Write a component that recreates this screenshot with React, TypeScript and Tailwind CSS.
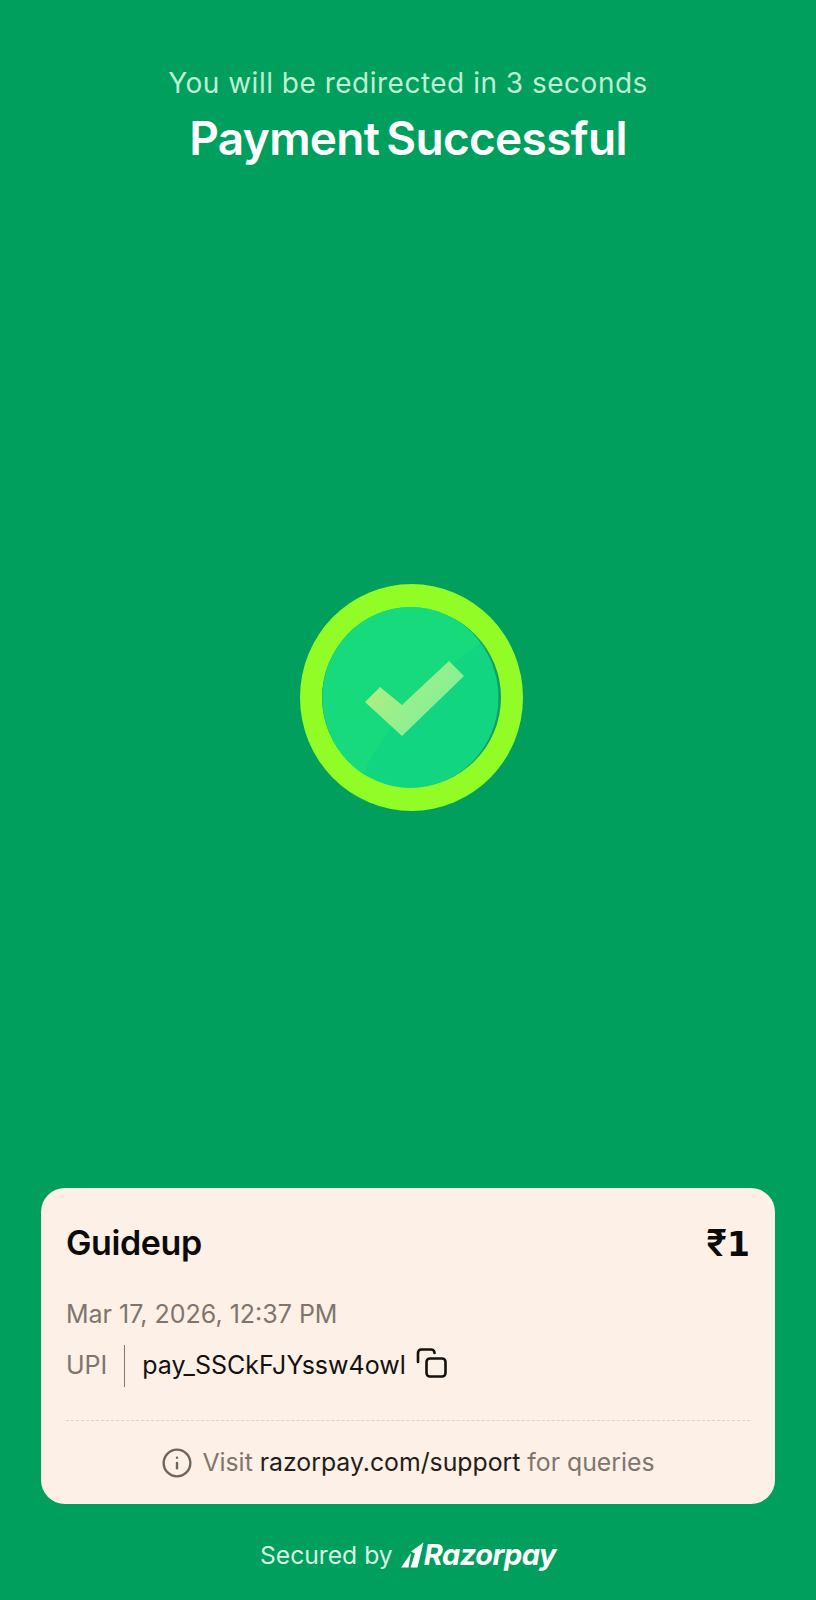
import { Info } from 'lucide-react';

function SuccessBadge() {
  return (
    <svg width="223" height="227" viewBox="0 0 223 227">
      <defs>
        <linearGradient id="tick" x1="65" y1="90" x2="140" y2="150" gradientUnits="userSpaceOnUse">
          <stop offset="0" stopColor="#b4ee80" />
          <stop offset="1" stopColor="#7ff097" />
        </linearGradient>
        <clipPath id="inner">
          <ellipse cx="110.5" cy="113.5" rx="88" ry="90.5" />
        </clipPath>
      </defs>
      <ellipse cx="111.5" cy="113.5" rx="111.5" ry="113.5" fill="#92fc27" />
      <circle cx="111.5" cy="113.5" r="89.5" fill="#0f9f62" />
      <ellipse cx="110.5" cy="113.5" rx="88" ry="90.5" fill="#11d580" />
      <path
        d="M 180 60 C 130 95 90 135 60 195 L 0 195 L 0 0 L 180 0 Z"
        fill="#16da7c"
        clipPath="url(#inner)"
      />
      <polygon points="65,118 80,103 102,121 149,77 164,92 102,152" fill="url(#tick)" />
    </svg>
  );
}

function CopyIcon() {
  return (
    <svg width="31" height="30" viewBox="0 0 31 30" fill="none" stroke="#15110e" strokeWidth="2.6" className="-mt-1.5">
      <rect x="10.5" y="10.5" width="19" height="18" rx="3.5" />
      <path d="M 2 14 V 5 C 2 3 3 1.5 5.5 1.5 H 15 C 17 1.5 18.5 3 18.5 5" strokeLinecap="round" />
    </svg>
  );
}

function RazorpayMark() {
  return (
    <svg width="23" height="26" viewBox="0 0 23 25" fill="#ffffff" className="mb-[4px]">
      <polygon points="0,25 10,10.5 7.5,25" />
      <polygon points="10,9 22.5,0 16.5,25 9.5,25 14,11" />
    </svg>
  );
}

export default function App() {
  return (
    <div className="flex min-h-[1600px] flex-col bg-[#009f5d] font-['Inter',sans-serif]">
      <header className="flex flex-col items-center pt-[65px] text-center">
        <p className="text-[28px] leading-[36px] tracking-[0.5px] text-[#bdf0d4]">
          You will be redirected in 3 seconds
        </p>
        <h1 className="mt-[11px] text-[46px] leading-[52px] font-semibold tracking-[-0.7px] text-white [word-spacing:-4px]">
          Payment Successful
        </h1>
      </header>

      <main className="flex flex-1 items-start justify-center pt-[420px] pl-[7px]">
        <SuccessBadge />
      </main>

      <section className="mx-[41px] rounded-[24px] bg-[#fdf0e6] px-[25px] pt-[35px]">
        <div className="flex h-[40px] items-center justify-between text-[#0d0b09]">
          <span className="text-[34px] leading-[40px] font-semibold tracking-[-0.4px]">Guideup</span>
          <span className="flex h-[40px] items-baseline leading-[40px]">
            <span className="text-[37px] font-semibold">₹</span>
            <span className="font-['DejaVu_Sans',sans-serif] text-[33px] font-bold">1</span>
          </span>
        </div>
        <p className="mt-[36px] text-[25px] leading-[30px] text-[#7f756d]">Mar 17, 2026, 12:37 PM</p>
        <div className="mt-[16px] flex h-[42px] items-center">
          <span className="text-[25px] text-[#7f756d]">UPI</span>
          <span className="ml-[17px] h-[42px] w-px bg-[#7f756d]" />
          <span className="ml-[17px] text-[25px] text-[#15110e]">pay_SSCkFJYssw4owl</span>
          <span className="ml-[10px]">
            <CopyIcon />
          </span>
        </div>
        <div className="mt-[33px] border-t border-dashed border-[#ded3c9]" />
        <div className="flex h-[83px] items-center justify-center text-[24.8px] text-[#7f756d]">
          <Info size={32} strokeWidth={1.8} className="mr-[9px] text-[#6f655d]" />
          <span>Visit&nbsp;</span>
          <span className="text-[#241c17]">razorpay.com/support</span>
          <span>&nbsp;for queries</span>
        </div>
      </section>

      <footer className="flex h-[96px] items-start justify-center pt-[34px]">
        <span className="text-[24.7px] leading-[34px] text-[#d5f5e3]">Secured by</span>
        <span className="ml-[8px] flex items-end">
          <RazorpayMark />
          <span className="text-[29px] leading-[34px] font-bold tracking-[-0.5px] text-white italic">Razorpay</span>
        </span>
      </footer>
    </div>
  );
}
